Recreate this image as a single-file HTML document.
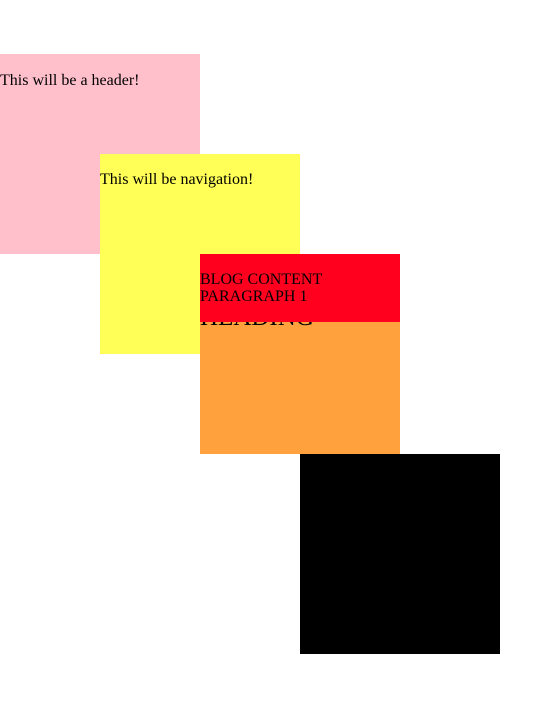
<!DOCTYPE html>
<html><head><meta charset="utf-8"><style>
html,body{margin:0;padding:0;background:#fff;width:546px;height:713px;overflow:hidden;font-family:"Liberation Serif",serif;font-size:16px;color:#000}
.b{position:absolute;width:200px;height:200px}
.t{position:absolute;left:0;white-space:nowrap;line-height:18px}
</style></head><body>
<div class="b" style="left:0;top:54px;background:#ffc0cb"><div class="t" style="top:18px">This will be a header!</div></div>
<div class="b" style="left:100px;top:154px;background:#ffff57"><div class="t" style="top:17px">This will be navigation!</div></div>
<div class="b" style="left:200px;top:254px;background:#ffa23d">
  <div class="t" style="top:49px;font-size:25px;line-height:29px">HEADING</div>
</div>
<div style="position:absolute;left:200px;top:254px;width:200px;height:68px;background:#ff001f">
  <div class="t" style="top:17px;line-height:17px">BLOG CONTENT<br>PARAGRAPH 1</div>
</div>
<div class="b" style="left:300px;top:454px;background:#000"></div>
</body></html>
